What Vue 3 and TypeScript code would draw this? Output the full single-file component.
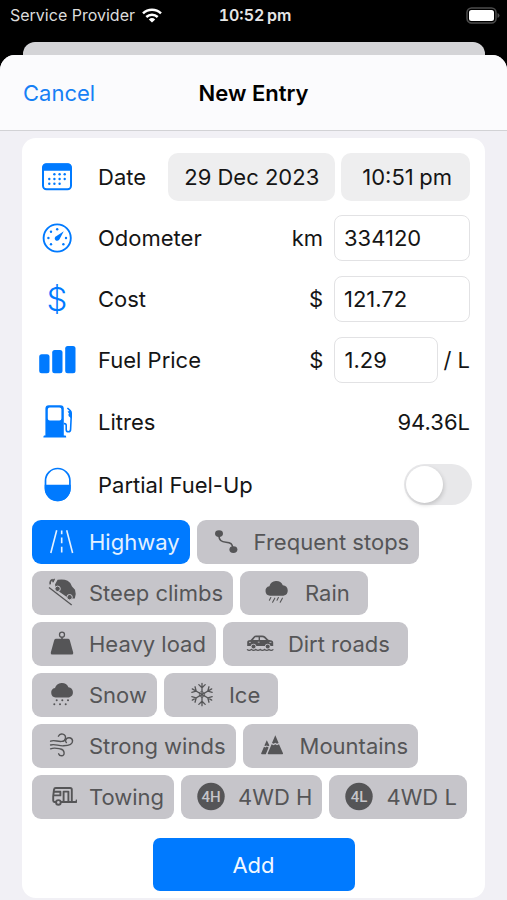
<script setup lang="ts">
import { reactive, ref } from 'vue'

interface Condition {
  label: string
  icon?: string
  badge?: string
  roomy?: boolean
}

const odometer = ref('334120')
const cost = ref('121.72')
const fuelPrice = ref('1.29')
const partial = ref(false)

const conditionRows: Condition[][] = [
  [
    { label: 'Highway', icon: 'highway' },
    { label: 'Frequent stops', icon: 'stops' },
  ],
  [
    { label: 'Steep climbs', icon: 'steep' },
    { label: 'Rain', icon: 'rain', roomy: true },
  ],
  [
    { label: 'Heavy load', icon: 'weight' },
    { label: 'Dirt roads', icon: 'dirt', roomy: true },
  ],
  [
    { label: 'Snow', icon: 'snow' },
    { label: 'Ice', icon: 'ice', roomy: true },
  ],
  [
    { label: 'Strong winds', icon: 'wind' },
    { label: 'Mountains', icon: 'mountains' },
  ],
  [
    { label: 'Towing', icon: 'towing' },
    { label: '4WD H', badge: '4H' },
    { label: '4WD L', badge: '4L' },
  ],
]

const selected = reactive(new Set<string>(['Highway']))

function toggle(label: string) {
  if (selected.has(label)) selected.delete(label)
  else selected.add(label)
}
</script>

<template>
  <div class="screen">
    <svg class="defs" aria-hidden="true">
      <symbol id="highway" viewBox="0 0 32 32">
        <g fill="none" stroke="currentColor" stroke-width="1.6">
          <path d="M11.7 4.3 5.8 27M21.7 4.3 27.6 27" />
          <path d="M16.7 4.6v3.6M16.7 11.4v5.8M16.7 20.8v5.6" />
        </g>
      </symbol>
      <symbol id="stops" viewBox="0 0 32 32">
        <path d="M9 8c-.4 6.600 2.600 8 7 8.200s6.600 1.400 7 6.800" fill="none" stroke="currentColor" stroke-width="1.600" />
        <ellipse cx="9" cy="7.600" rx="4" ry="3.400" fill="currentColor" />
        <ellipse cx="23.400" cy="23.600" rx="4" ry="3.400" fill="currentColor" />
      </symbol>
      <symbol id="steep" viewBox="0 0 32 32">
        <path d="M4 10.600 26.700 28" stroke="currentColor" stroke-width="1.300" />
        <path d="M10 7.400 12.600 2.800Q18.500 1.600 22.600 3.800 25.400 5.200 27 9.400L30 12.800Q31.600 17 29.800 21.400L24 21.400 11 12.400Z" fill="currentColor" />
        <path d="M5.200 7.400Q4.600 3.400 7.800 2.400M8 5.200Q8 2.600 9.800 2.200" fill="none" stroke="currentColor" stroke-width="1.600" />
        <g fill="currentColor" stroke="#c6c5ca" stroke-width="1">
          <circle cx="12.600" cy="11.800" r="2.700" />
          <circle cx="24.600" cy="20.200" r="2.700" />
        </g>
      </symbol>
      <symbol id="rain" viewBox="0 0 32 32">
        <path d="M9 18.700a4.800 4.800 0 0 1-.6-9.500A7.200 7.200 0 0 1 21.800 8.200a5.300 5.300 0 0 1 .6 10.500z" fill="currentColor" />
        <path d="m9.800 20.600-1.400 2.600M13.800 21.200l-2.200 4M17.400 20.600 16 23.200M21.400 21.200l-2.200 4" stroke="currentColor" stroke-width="1.100" stroke-linecap="round" />
      </symbol>
      <symbol id="weight" viewBox="0 0 32 32">
        <circle cx="17" cy="6.700" r="2.500" fill="none" stroke="currentColor" stroke-width="1.300" />
        <path d="M11.200 10.800h11.600q1.600 0 2 1.400l3.400 12.200q.5 2.200-1.600 2.200H7.400q-2.100 0-1.600-2.200l3.400-12.200q.4-1.400 2-1.400zM16.200 9h1.600v2h-1.600z" fill="currentColor" />
      </symbol>
      <symbol id="dirt" viewBox="0 0 32 32">
        <path d="M6.600 12 9.800 8.400Q10.600 7.400 12 7.400h6q2 0 3.200 1.200l3.200 3.200 3.400.8q1.400.4 1.400 2v3.400h-2.600a3 3 0 0 0-5.800 0H12.400a3 3 0 0 0-5.800 0H3.200v-4q0-1.800 3.400-2z" fill="currentColor" />
        <path d="M9 12l2.200-2.800h3.400V12zM16 9.200h2.400q1 0 1.800.8l2 2H16z" fill="#c6c5ca" />
        <path d="M13.800 14.200h1.800M5 14.400h1.800M25.400 14.400h2" stroke="#c6c5ca" stroke-width=".8" />
        <circle cx="9.500" cy="18.600" r="2" fill="currentColor" />
        <circle cx="23.700" cy="18.600" r="2" fill="currentColor" />
        <path d="M3 21.400q2.200 2 4.400 0 2.200 2 4.400 0 2.200 2 4.400 0 2.200 2 4.400 0 2.200 2 4.400 0 2.200 2 4.400 0" fill="none" stroke="currentColor" stroke-width="1.200" />
      </symbol>
      <symbol id="snow" viewBox="0 0 32 32">
        <path d="M10.600 18.400a4.700 4.700 0 0 1-.6-9.300A7.200 7.200 0 0 1 23.400 8.200a5.200 5.200 0 0 1 .6 10.200z" fill="currentColor" />
        <path d="M11.700 21.200h.01M17.300 21.200h.01M23 21.200h.01M9.300 25.200h.01M15 25.200h.01M20.700 25.200h.01" stroke="currentColor" stroke-width="2" stroke-linecap="round" />
      </symbol>
      <symbol id="ice" viewBox="0 0 32 32">
        <defs>
          <path id="ice-arm" d="M17 15.500V4.300M13.800 5.600 17 8.800l3.200-3.200" />
        </defs>
        <g fill="none" stroke="currentColor" stroke-width="1.300" stroke-linecap="round">
          <use href="#ice-arm" />
          <use href="#ice-arm" transform="rotate(60 17 15.500)" />
          <use href="#ice-arm" transform="rotate(120 17 15.500)" />
          <use href="#ice-arm" transform="rotate(180 17 15.500)" />
          <use href="#ice-arm" transform="rotate(240 17 15.500)" />
          <use href="#ice-arm" transform="rotate(300 17 15.500)" />
          <path d="m17 12.500 2.600 1.500v3L17 18.500 14.400 17v-3z" stroke-width=".8" />
        </g>
      </symbol>
      <symbol id="wind" viewBox="0 0 32 32">
        <g fill="none" stroke="currentColor" stroke-width="1.400" stroke-linecap="round">
          <path d="M5.600 11.200c3.600-1.800 7 .8 11 .2a3.700 3.700 0 1 0-3.200-5.200" />
          <path d="M5.600 15c4-1.600 8 1.200 13 .8 5 0 9-1.200 9-5a3.600 3.600 0 0 0-7-.4q-.2 1.400.8 2.200" />
          <path d="M5.600 18.800c4-1.600 7-.4 10 .2 4.400 1 4.600 6.600 1 6.800q-2.400 0-3-2" />
        </g>
      </symbol>
      <symbol id="mountains" viewBox="0 0 32 32">
        <path d="M19.300 5.200 22.600 13l-1.600.8-1.700-1-1.700 1-1.600-.8zM15.600 14.200l2 1 1.700-1 1.700 1 2-1 4 9q.4 1.100-.8 1.100H12.600q-1.200 0-.8-1.100z" fill="currentColor" />
        <path d="m10.800 10.200 2.600 5.400-1.200.6-1.400-.8-1.600.6-.8-.6zM8 16.800l1.400.6 1.400-.8 1.800.8-2.800 6.900H6q-1.200 0-.8-1.100z" fill="currentColor" />
      </symbol>
      <symbol id="towing" viewBox="0 0 32 32">
        <g fill="none" stroke="currentColor" stroke-width="1.900" stroke-linejoin="round">
          <path d="M11 21H9.400q-1.200 0-1.200-1.400v-4.200L9 8.600q.2-1.600 1.800-1.600h14.400q1.600 0 1.600 1.600V21H15.800" />
          <path d="M9 14.400h6.400v-3.600H9M18.600 21V10.600h4.800V21M26.800 21h4q1 0 .8-2.400" />
          <circle cx="13.400" cy="21.400" r="2.300" />
        </g>
      </symbol>
    </svg>

    <header class="status">
      <div class="carrier">
        <span>Service Provider</span>
        <svg class="wifi" viewBox="0 0 20 15" aria-hidden="true">
          <g fill="none" stroke="currentColor" stroke-width="2.500">
            <path d="M1 5.400a13 13 0 0 1 18 0" />
            <path d="M4.300 9a8.400 8.400 0 0 1 11.400 0" />
          </g>
          <path d="M6.800 11.400a4.800 4.800 0 0 1 6.400 0L10 14.600z" fill="currentColor" />
        </svg>
      </div>
      <time class="clock">10:52&#8201;pm</time>
      <svg class="battery" viewBox="0 0 34 17" aria-hidden="true">
        <rect x="1" y="1" width="29" height="15" rx="4.500" fill="none" stroke="#4c4c4c" stroke-width="1.500" />
        <rect x="3" y="3" width="25" height="11" rx="2.500" fill="#fff" />
        <path d="M31.500 6v5q2-.6 2-2.500t-2-2.500z" fill="#4c4c4c" />
      </svg>
    </header>
    <div class="behind"></div>

    <main class="sheet">
      <nav class="nav">
        <button type="button" class="cancel">Cancel</button>
        <h1>New Entry</h1>
      </nav>

      <form class="card" @submit.prevent>
        <div class="row">
          <svg class="icon" viewBox="0 0 40 40" aria-hidden="true">
            <rect x="6" y="7.300" width="28" height="25" rx="3.500" fill="none" stroke="currentColor" stroke-width="2" />
            <path d="M5.500 13.700V10q0-3.600 3.600-3.600h21.800q3.600 0 3.600 3.600v3.700z" fill="currentColor" />
            <g fill="currentColor">
              <circle cx="17.400" cy="17.300" r="1.200" /><circle cx="22.600" cy="17.300" r="1.200" /><circle cx="27.700" cy="17.300" r="1.200" />
              <circle cx="12.300" cy="22" r="1.200" /><circle cx="17.400" cy="22" r="1.200" /><circle cx="22.600" cy="22" r="1.200" /><circle cx="27.700" cy="22" r="1.200" />
              <circle cx="12.300" cy="26.700" r="1.200" /><circle cx="17.400" cy="26.700" r="1.200" /><circle cx="22.600" cy="26.700" r="1.200" />
            </g>
          </svg>
          <span class="label">Date</span>
          <div class="pills">
            <button type="button" class="pill">29 Dec 2023</button>
            <button type="button" class="pill time">10:51&#8197;pm</button>
          </div>
        </div>

        <div class="row">
          <svg class="icon" viewBox="0 0 40 40" aria-hidden="true">
            <circle cx="20.200" cy="20" r="13.600" fill="none" stroke="currentColor" stroke-width="1.900" />
            <g fill="currentColor">
              <circle cx="20.200" cy="11.200" r="1.200" /><circle cx="14" cy="13.800" r="1.200" />
              <circle cx="11.400" cy="20" r="1.200" /><circle cx="29" cy="20" r="1.200" />
              <circle cx="14" cy="26.200" r="1.200" /><circle cx="26.400" cy="26.200" r="1.200" />
              <path d="M26.800 13.200 22.400 21.400q-1.600 2-3.600 1-2-1.600-.4-3.600z" />
            </g>
          </svg>
          <label class="label" for="odometer">Odometer</label>
          <span class="unit">km</span>
          <input id="odometer" v-model="odometer" class="field" inputmode="numeric" />
        </div>

        <div class="row">
          <svg class="icon" viewBox="0 0 40 40" aria-hidden="true">
            <text x="20" y="31.500" class="dollar">$</text>
          </svg>
          <label class="label" for="cost">Cost</label>
          <span class="unit">$</span>
          <input id="cost" v-model="cost" class="field" inputmode="decimal" />
        </div>

        <div class="row">
          <svg class="icon" viewBox="0 0 40 40" aria-hidden="true">
            <g fill="currentColor">
              <rect x="2.200" y="14.300" width="10.300" height="19" rx="2.500" />
              <rect x="15.200" y="10" width="10.300" height="23.300" rx="2.500" />
              <rect x="28.200" y="6" width="10.300" height="27.300" rx="2.500" />
            </g>
          </svg>
          <label class="label" for="price">Fuel Price</label>
          <span class="unit">$</span>
          <input id="price" v-model="fuelPrice" class="field short" inputmode="decimal" />
          <span class="suffix">/ L</span>
        </div>

        <div class="row tall">
          <svg class="icon" viewBox="0 0 40 40" aria-hidden="true">
            <path fill-rule="evenodd" d="M8.400 33.600V6.600q0-3.400 3.400-3.400h11.600q3.400 0 3.400 3.400v27h1.600q.8.200.8 1.900H6.400q0-1.700.8-1.900zM12.800 5.400q-2 0-2 2v9.200q0 2 2 2h9.600q2 0 2-2V7.400q0-2-2-2z" fill="currentColor" />
            <path d="M26.800 21.600h.6q1.800 0 1.800 1.800v4q0 2.400 2.200 2.400t2.200-2.600l.6-12.400V11q0-1.600-1.200-2.600L30.400 6" fill="none" stroke="currentColor" stroke-width="1.600" />
            <path d="M30.600 9.400 34 8.600l.4 8-2.600-2.400q-1-1.400.2-2.600z" fill="currentColor" />
          </svg>
          <span class="label">Litres</span>
          <output class="value">94.36L</output>
        </div>

        <div class="row tall">
          <svg class="icon" viewBox="0 0 40 40" aria-hidden="true">
            <rect x="8.500" y="3.500" width="24.400" height="32" rx="12.200" fill="none" stroke="currentColor" stroke-width="1.700" />
            <path d="M7.700 19.700h26v3.600a13 13 0 0 1-26 0z" fill="currentColor" />
          </svg>
          <label class="label" for="partial">Partial Fuel-Up</label>
          <input id="partial" v-model="partial" class="switch" type="checkbox" role="switch" />
        </div>

        <div class="conditions">
          <div v-for="(row, i) in conditionRows" :key="i" class="chip-row">
            <button
              v-for="c in row"
              :key="c.label"
              type="button"
              class="chip"
              :class="{ on: selected.has(c.label), roomy: c.roomy }"
              :aria-pressed="selected.has(c.label)"
              @click="toggle(c.label)"
            >
              <svg v-if="c.badge" class="chip-icon" viewBox="0 0 32 32" aria-hidden="true">
                <circle cx="17" cy="15.500" r="13.700" fill="currentColor" />
                <text x="17" y="20.700" class="badge-text">{{ c.badge }}</text>
              </svg>
              <svg v-else class="chip-icon" aria-hidden="true"><use :href="'#' + c.icon" /></svg>
              <span>{{ c.label }}</span>
            </button>
          </div>
        </div>

        <button type="submit" class="add">Add</button>
      </form>
    </main>
  </div>
</template>

<style>
body {
  margin: 0;
  background: #000;
}
</style>

<style scoped>
.screen {
  display: flex;
  flex-direction: column;
  min-height: 100vh;
  background: #000;
  color: #151515;
  font-family: Inter, "Liberation Sans", sans-serif;
  font-size: 22px;
  line-height: 28px;
}

button,
input {
  font: inherit;
  color: inherit;
  box-sizing: border-box;
  margin: 0;
}

button {
  border: 0;
  cursor: pointer;
  white-space: nowrap;
}

.defs {
  position: absolute;
  width: 0;
  height: 0;
}

.status {
  display: grid;
  grid-template-columns: 1fr auto 1fr;
  align-items: center;
  height: 30px;
  margin-bottom: 12px;
  padding: 0 7px 0 10px;
  color: #e6e6e6;
  font-size: 16px;
}

.carrier {
  display: flex;
  align-items: center;
  gap: 7px;
  color: #dcdcdc;
  white-space: nowrap;
}

.wifi {
  width: 20px;
  height: 15px;
  color: #fff;
}

.clock {
  font-weight: 600;
  font-variant-numeric: tabular-nums;
}

.battery {
  justify-self: end;
  width: 34px;
  height: 17px;
}

.behind {
  height: 13px;
  margin: 0 22px 0 23px;
  border-radius: 12px 12px 0 0;
  background: #d4d4d7;
}

.sheet {
  flex: 1;
  border-radius: 15px 15px 0 0;
  background: #f1f0f5;
  overflow: hidden;
}

.nav {
  display: grid;
  grid-template-columns: 1fr auto 1fr;
  align-items: center;
  height: 75px;
  padding: 0 23px;
  border-bottom: 1px solid #d2d2d5;
  background: #fbfbfd;
}

.cancel {
  justify-self: start;
  padding: 0;
  background: none;
  color: #1680f5;
}

.nav h1 {
  margin: 0;
  font-size: 22px;
  font-weight: 600;
  color: #000;
}

.card {
  display: flex;
  flex-direction: column;
  margin: 7px 22px 2px;
  padding: 8px 10px 7px;
  border-radius: 14px;
  background: #fff;
}

.row {
  display: flex;
  align-items: center;
  min-height: 61px;
  padding-right: 5px;
}

.row.tall {
  min-height: 63px;
}

.icon {
  flex: none;
  width: 40px;
  height: 40px;
  margin: 0 21px 0 5px;
  color: #007aff;
}

.dollar {
  fill: currentColor;
  font-size: 33px;
  font-weight: 300;
  text-anchor: middle;
}

.label {
  flex: 1;
  white-space: nowrap;
}

.pills {
  display: flex;
  gap: 6px;
}

.pill {
  height: 48px;
  padding: 0 16px;
  border-radius: 10px;
  background: #eeeeef;
}

.pill.time {
  padding: 0 18px 0 21px;
}

.unit {
  margin-right: 11px;
}

.field {
  width: 136px;
  height: 46px;
  padding: 0 9px;
  border: 1px solid #e2e2e4;
  border-radius: 8px;
  background: #fff;
}

.field.short {
  width: 104px;
}

.suffix {
  margin-left: 5px;
}

.switch {
  appearance: none;
  width: 68px;
  height: 41px;
  margin-right: -2px;
  padding: 2px;
  border-radius: 21px;
  background: #e8e8ea;
  cursor: pointer;
}

.switch::before {
  content: "";
  display: block;
  width: 37px;
  height: 37px;
  border-radius: 50%;
  background: #fff;
  box-shadow: 1px 2px 4px rgba(0, 0, 0, 0.16);
}

.switch:checked {
  background: #34c759;
}

.switch:checked::before {
  margin-left: 27px;
}

.conditions {
  display: flex;
  flex-direction: column;
  gap: 7px;
  margin-top: 4px;
}

.chip-row {
  display: flex;
  gap: 7px;
}

.chip {
  display: flex;
  align-items: center;
  gap: 12px;
  height: 44px;
  padding: 0 10px 0 13px;
  border-radius: 9px;
  background: #c6c5ca;
  color: #555557;
}

.chip.roomy {
  padding: 0 18px 0 21px;
}

.chip.on {
  background: #007aff;
  color: #e4f1ff;
}

.chip-icon {
  flex: none;
  width: 32px;
  height: 32px;
}

.badge-text {
  fill: #c6c5ca;
  font-family: Roboto, "Liberation Sans", sans-serif;
  font-size: 15px;
  font-weight: 500;
  text-anchor: middle;
}

.add {
  align-self: center;
  width: 202px;
  height: 53px;
  margin-top: 19px;
  border-radius: 7px;
  background: #007aff;
  color: #f2f8ff;
}
</style>
